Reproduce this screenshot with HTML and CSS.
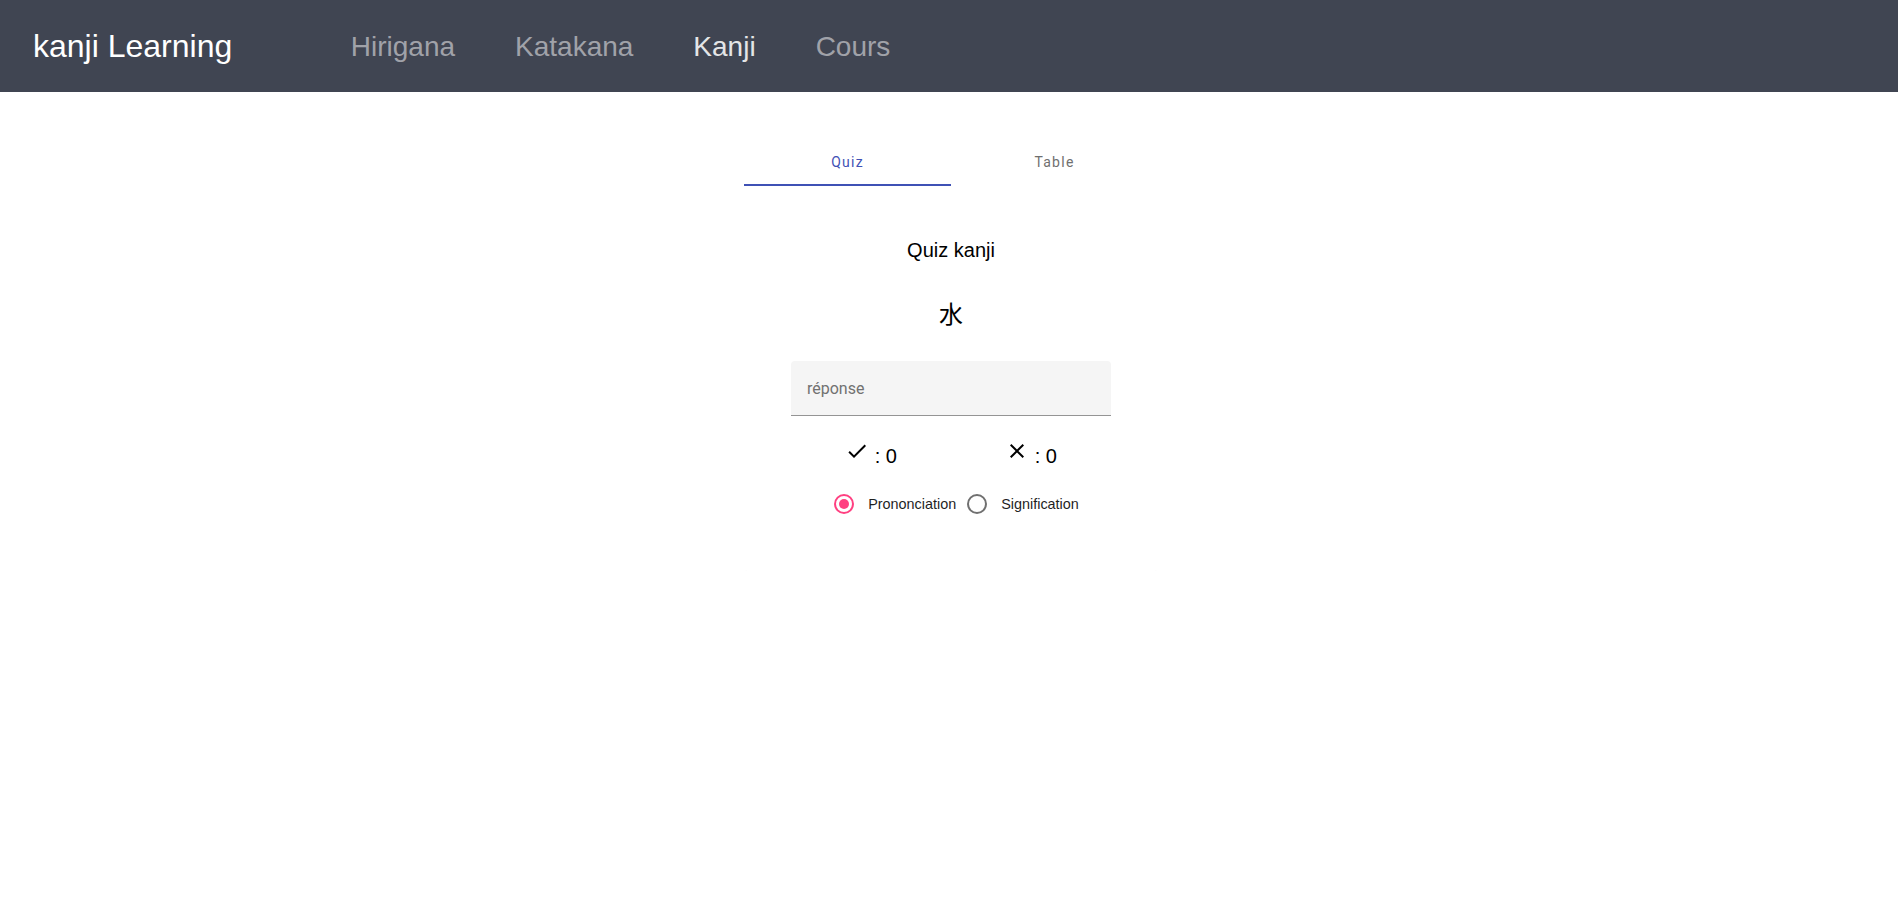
FILE: index.html
```html
<!DOCTYPE html>
<html lang="fr">
<head>
<meta charset="utf-8">
<title>kanji Learning</title>
<link rel="stylesheet" href="styles.css">
</head>
<body>
<nav class="navbar">
  <a class="brand" href="#">kanji Learning</a>
  <ul class="nav-links">
    <li><a class="nav-link" href="#">Hirigana</a></li>
    <li><a class="nav-link" href="#">Katakana</a></li>
    <li><a class="nav-link active" href="#">Kanji</a></li>
    <li><a class="nav-link" href="#">Cours</a></li>
  </ul>
</nav>
<main class="page">
  <section class="card">
    <div class="tabs">
      <div class="tab tab-active">Quiz</div>
      <div class="tab">Table</div>
    </div>
    <div class="quiz">
      <h2 class="quiz-title">Quiz kanji</h2>
      <div class="kanji">水</div>
      <input class="answer" type="text" placeholder="réponse">
      <div class="scores">
        <div class="score"><svg class="icon" viewBox="0 0 24 24" width="24" height="24"><path d="M9 16.17L4.83 12l-1.42 1.41L9 19 21 7l-1.41-1.41z"/></svg> : 0</div>
        <div class="score"><svg class="icon" viewBox="0 0 24 24" width="24" height="24"><path d="M19 6.41L17.59 5 12 10.59 6.41 5 5 6.41 10.59 12 5 17.59 6.41 19 12 13.41 17.59 19 19 17.59 13.41 12z"/></svg> : 0</div>
      </div>
      <div class="modes">
        <label class="radio"><span class="radio-circle checked"></span><span class="radio-label">Prononciation</span></label>
        <label class="radio"><span class="radio-circle"></span><span class="radio-label">Signification</span></label>
      </div>
    </div>
  </section>
</main>
</body>
</html>
```
FILE: styles.css
```css
* { box-sizing: border-box; }

body {
  margin: 0;
  font-family: "Liberation Sans", Arial, sans-serif;
  background: #ffffff;
  color: #000;
}

.navbar {
  height: 92px;
  background: #404552;
  display: flex;
  align-items: flex-start;
  padding-left: 33px;
}

.brand {
  margin-top: 28px;
  font-size: 32px;
  line-height: 37px;
  color: #ffffff;
  text-decoration: none;
}

.nav-links {
  list-style: none;
  margin: 31px 0 0 88.5px;
  padding: 0;
  display: flex;
}

.nav-link {
  display: block;
  padding: 0 30px;
  font-size: 28px;
  line-height: 32px;
  color: #a0a2a9;
  text-decoration: none;
}

.nav-link.active {
  color: #e4e5e7;
}

.page {
  padding-top: 46px;
}

.card {
  width: 414px;
  margin-left: calc(50% - 205px);
  padding-bottom: 57px;
  border-radius: 4px;
  box-shadow: 0 1px 1px -1px rgba(0, 0, 0, 0.06);
}

.tabs {
  display: flex;
}

.tab {
  flex: 1;
  height: 48px;
  padding-top: 2px;
  display: flex;
  align-items: center;
  justify-content: center;
  font-family: Roboto, "Liberation Sans", sans-serif;
  font-size: 14px;
  letter-spacing: 1.25px;
  color: #6f6f6f;
  border-bottom: 2px solid transparent;
}

.tab-active {
  color: #3f51b5;
  border-bottom-color: #3f51b5;
}

.quiz {
  width: 320px;
  margin: 0 auto;
  display: flex;
  flex-direction: column;
  align-items: stretch;
}

.quiz-title {
  margin: 52px 0 0;
  font-size: 20px;
  font-weight: normal;
  line-height: 24px;
  text-align: center;
}

.kanji {
  margin-top: 37px;
  font-family: "Noto Sans CJK JP", sans-serif;
  font-size: 24px;
  line-height: 28px;
  text-align: center;
}

.answer {
  margin-top: 34px;
  height: 55px;
  width: 100%;
  padding: 0 16px;
  border: none;
  border-bottom: 1px solid #949494;
  border-radius: 4px 4px 0 0;
  background: #f5f5f5;
  font-family: Roboto, "Liberation Sans", sans-serif;
  font-size: 16px;
  color: #000;
  outline: none;
}

.answer::placeholder {
  color: #717171;
}

.scores {
  margin-top: 23px;
  display: flex;
}

.score {
  flex: 1;
  text-align: center;
  font-size: 20px;
  line-height: 24px;
}

.icon {
  display: inline-block;
  vertical-align: baseline;
  fill: #000;
}

.modes {
  margin-top: 26px;
  display: flex;
  justify-content: center;
  align-items: center;
  padding-left: 11px;
}

.radio {
  display: flex;
  align-items: center;
  margin-right: 11px;
  font-size: 14.4px;
  color: #1f1f1f;
}

.radio:last-child {
  margin-right: 0;
}

.radio-circle {
  width: 20px;
  height: 20px;
  border: 2px solid #707070;
  border-radius: 50%;
  margin-right: 14px;
  display: flex;
  align-items: center;
  justify-content: center;
}

.radio-circle.checked {
  border-color: #ff4081;
}

.radio-circle.checked::after {
  content: "";
  width: 10px;
  height: 10px;
  border-radius: 50%;
  background: #ff4081;
}
```
